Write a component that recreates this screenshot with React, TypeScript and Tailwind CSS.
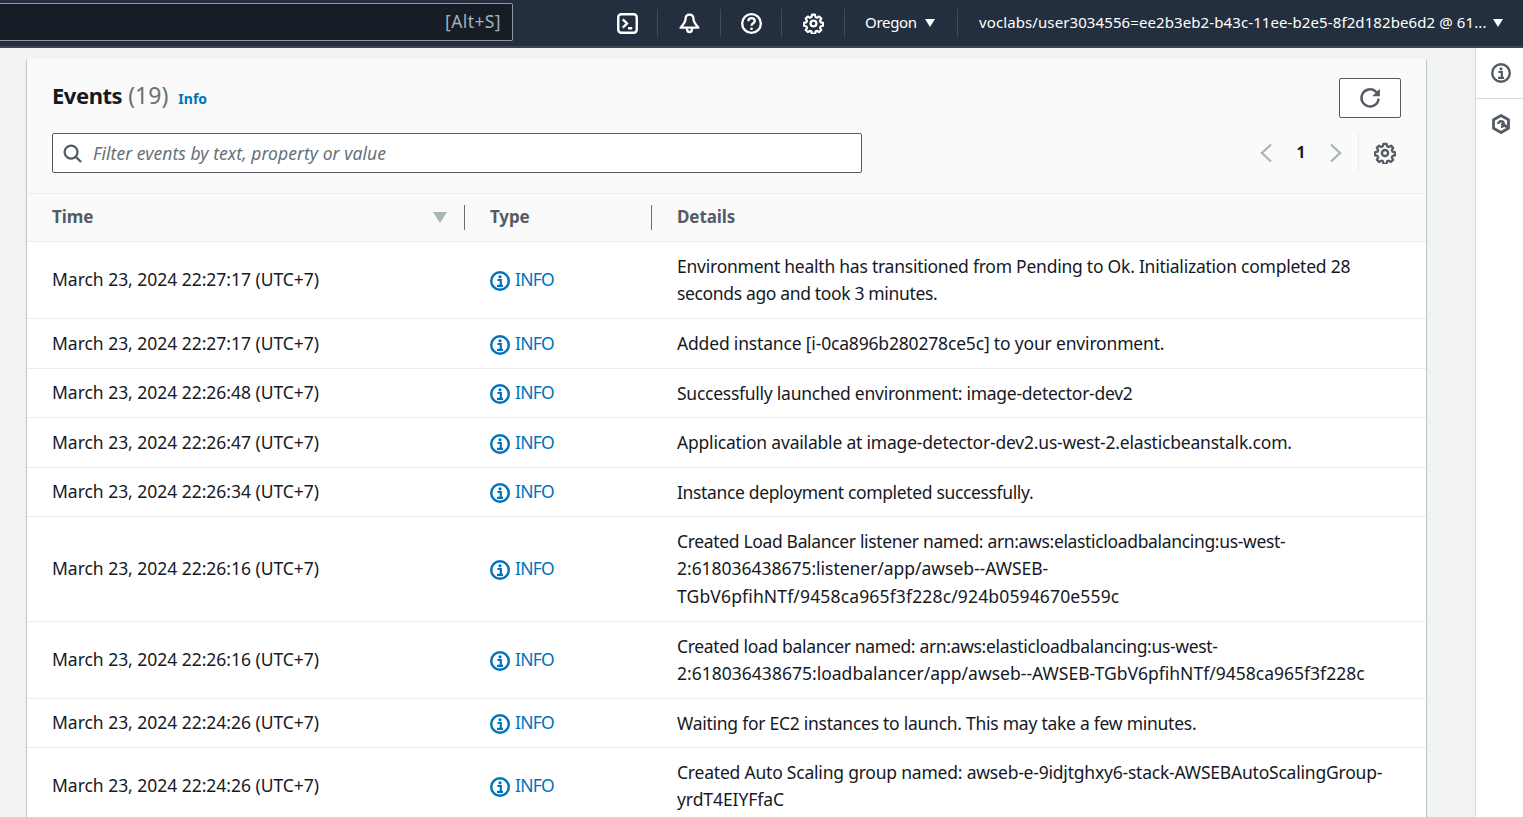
import React from "react";

type Line = [string, string];
const rows: { time: string; lines: Line[]; h: string; d: string }[] = [
  { time: "March 23, 2024 22:27:17 (UTC+7)", d: "", h: "h-[77px]", lines: [["Environment health has transitioned from Pending to Ok. Initialization completed 28", "tracking-[-0.24px]"], ["seconds ago and took 3 minutes.", "tracking-[-0.35px]"]] },
  { time: "March 23, 2024 22:27:17 (UTC+7)", d: "", h: "h-[50px]", lines: [["Added instance [i-0ca896b280278ce5c] to your environment.", "tracking-[-0.175px]"]] },
  { time: "March 23, 2024 22:26:48 (UTC+7)", d: "mt-[1px]", h: "h-[49px]", lines: [["Successfully launched environment: image-detector-dev2", "tracking-[-0.26px]"]] },
  { time: "March 23, 2024 22:26:47 (UTC+7)", d: "", h: "h-[50px]", lines: [["Application available at image-detector-dev2.us-west-2.elasticbeanstalk.com.", "tracking-[-0.2px]"]] },
  { time: "March 23, 2024 22:26:34 (UTC+7)", d: "mt-[1px]", h: "h-[49px]", lines: [["Instance deployment completed successfully.", "tracking-[-0.35px]"]] },
  { time: "March 23, 2024 22:26:16 (UTC+7)", d: "", h: "h-[105px]", lines: [["Created Load Balancer listener named: arn:aws:elasticloadbalancing:us-west-", "tracking-[-0.34px]"], ["2:618036438675:listener/app/awseb--AWSEB-", "tracking-[-0.03px]"], ["TGbV6pfihNTf/9458ca965f3f228c/924b0594670e559c", "tracking-[0.15px]"]] },
  { time: "March 23, 2024 22:26:16 (UTC+7)", d: "", h: "h-[77px]", lines: [["Created load balancer named: arn:aws:elasticloadbalancing:us-west-", "tracking-[-0.33px]"], ["2:618036438675:loadbalancer/app/awseb--AWSEB-TGbV6pfihNTf/9458ca965f3f228c", "tracking-[0.01px]"]] },
  { time: "March 23, 2024 22:24:26 (UTC+7)", d: "mt-[1px]", h: "h-[49px]", lines: [["Waiting for EC2 instances to launch. This may take a few minutes.", "tracking-[-0.26px]"]] },
  { time: "March 23, 2024 22:24:26 (UTC+7)", d: "", h: "h-[77px]", lines: [["Created Auto Scaling group named: awseb-e-9idjtghxy6-stack-AWSEBAutoScalingGroup-", "tracking-[-0.21px]"], ["yrdT4EIYFfaC", "tracking-[-0.08px]"]] },
];

function InfoIcon({ className, color }: { className: string; color: string }) {
  return (
    <svg viewBox="0 0 20 20" className={className} fill="none">
      <circle cx="10" cy="10" r="8.8" stroke={color} strokeWidth="2.4" />
      <circle cx="10" cy="5.8" r="1.6" fill={color} />
      <path d="M7.4 9h3.400v5.400M7 14.800h6" stroke={color} strokeWidth="2.200" />
    </svg>
  );
}

function Gear({ className, color, sw = 2.2 }: { className: string; color: string; sw?: number }) {
  return (
    <svg viewBox="0 0 20 20" className={className} fill="none" stroke={color} strokeWidth={sw} strokeLinejoin="round">
      <circle cx="10" cy="10" r="2.800" />
      <path d="M8.500 1.200h3l.5 2.400 1.600.7 2.100-1.300 2.100 2.100-1.300 2.100.7 1.600 2.400.5v3l-2.400.5-.7 1.600 1.300 2.100-2.100 2.100-2.100-1.300-1.600.7-.5 2.400h-3l-.5-2.400-1.600-.7-2.100 1.300-2.100-2.100 1.300-2.100-.7-1.600-2.400-.5v-3l2.400-.5.7-1.600-1.300-2.100 2.100-2.100 2.100 1.300 1.600-.7z" transform="translate(0.5 0.5) scale(0.95)" />
    </svg>
  );
}

function Divider({ x }: { x: string }) {
  return <div className={`w-px h-[28px] bg-[#414d5c] shrink-0 ${x}`} />;
}

export default function App() {
  return (
    <div className="w-[1523px] h-[817px] overflow-hidden bg-[#f2f3f3] flex flex-col text-[#16191f] text-[17.5px] font-['Noto_Sans','Open_Sans',sans-serif]">
      <header className="h-[48px] shrink-0 bg-[#232f3e] border-b-2 border-[#3d4650] flex items-center">
        <div className="w-[513px] h-[38px] -mt-[3px] shrink-0 bg-[#161d26] border border-[#8d99a8] border-l-0 rounded-r-[2px] flex items-center justify-end pr-[11px] text-[#a3aebc] text-[17.5px] tracking-[0.4px]">
          [Alt+S]
        </div>
        <div className="ml-[104px] w-[20px] shrink-0">
          <svg viewBox="0 0 20 20" className="w-[21px] h-[21px]" fill="none" stroke="#fff" strokeWidth="2.300">
            <rect x="1.200" y="1.200" width="17.600" height="17.600" rx="2.800" />
            <path d="M5.500 6l4 4-4 4M10.500 14.500h4" />
          </svg>
        </div>
        <Divider x="ml-[20px]" />
        <div className="ml-[21px] w-[21px] shrink-0">
          <svg viewBox="0 0 20 20" className="w-[21px] h-[21px]" fill="none" stroke="#fff" strokeWidth="2.200" strokeLinejoin="round">
            <path d="M10 1.500c-2.500 0-3.800 1.900-3.800 4.300 0 3.200-1.500 4.700-4.700 8.200h17c-3.200-3.500-4.700-5-4.700-8.200 0-2.400-1.300-4.300-3.800-4.300z" />
            <path d="M7.500 14.500c0 2.300 1 3.700 2.500 3.700s2.500-1.400 2.500-3.700" />
          </svg>
        </div>
        <Divider x="ml-[20px]" />
        <div className="ml-[20px] w-[20px] shrink-0">
          <svg viewBox="0 0 20 20" className="w-[21px] h-[21px]" fill="none" stroke="#fff" strokeWidth="2.200">
            <circle cx="10" cy="10" r="8.900" />
            <path d="M7 7.800c0-1.800 1.300-3 3.100-3s3 1.100 3 2.700c0 2.300-3.100 2.300-3.100 4.700" />
            <circle cx="10" cy="15" r="1.300" fill="#fff" stroke="none" />
          </svg>
        </div>
        <Divider x="ml-[20px]" />
        <div className="ml-[21px] w-[20px] shrink-0">
          <Gear className="w-[21px] h-[21px]" color="#fff" />
        </div>
        <Divider x="ml-[21px]" />
        <div className="ml-[20px] w-[52px] shrink-0 text-white text-[15px] tracking-[-0.3px] -mt-[2px] whitespace-nowrap">Oregon</div>
        <div className="ml-[8px] w-0 h-0 -mt-[1px] border-l-[5.500px] border-r-[5.500px] border-t-[8px] border-l-transparent border-r-transparent border-t-white" />
        <Divider x="ml-[22px]" />
        <div className="ml-[21px] text-white text-[15px] tracking-[0.1px] -mt-[2px] whitespace-nowrap">voclabs/user3034556=ee2b3eb2-b43c-11ee-b2e5-8f2d182be6d2 @ 61...</div>
        <div className="ml-[6px] w-0 h-0 -mt-[1px] border-l-[5.500px] border-r-[5.500px] border-t-[8px] border-l-transparent border-r-transparent border-t-white" />
      </header>

      <div className="flex flex-1 min-h-0">
        <main className="flex-1 min-w-0 pl-[27px] pr-[48px] pt-[11px]">
          <section className="w-[1399px] bg-white shadow-[0_1px_1px_0_rgba(0,28,36,0.3),1px_1px_1px_0_rgba(0,28,36,0.15),-1px_1px_1px_0_rgba(0,28,36,0.15)]">
            <div className="h-[135px] bg-[#fafafa] border-b border-[#eaeded] px-[25px] flex flex-col">
              <div className="h-[74px] flex items-start justify-between">
                <div className="flex items-baseline pt-[20px]">
                  <span className="text-[22px] font-bold leading-[32px] tracking-[-0.45px]">Events</span>
                  <span className="ml-[6px] text-[23px] leading-[32px] text-[#687078]">(19)</span>
                  <span className="ml-[10px] text-[14px] font-bold text-[#0073bb]">Info</span>
                </div>
                <button className="mt-[19px] w-[62px] h-[40px] border border-[#545b64] rounded-[2px] flex items-center justify-center bg-white">
                  <svg viewBox="0 0 20 20" className="w-[22px] h-[22px]" fill="none" stroke="#545b64" strokeWidth="2.200">
                    <path d="M17.800 10.500a7.800 7.800 0 1 1-2.600-6.400L18 7" />
                    <path d="M19 1.500v7h-7z" fill="#545b64" stroke="none" />
                  </svg>
                </button>
              </div>
              <div className="flex items-start">
                <div className="w-[810px] h-[40px] border border-[#545b64] rounded-[2px] bg-white flex items-center pl-[10px]">
                  <svg viewBox="0 0 20 20" className="w-[19px] h-[19px] shrink-0" fill="none" stroke="#545b64" strokeWidth="2.400">
                    <circle cx="8.500" cy="8.500" r="6.800" />
                    <path d="M13.500 13.500L19 19" />
                  </svg>
                  <span className="ml-[11px] italic text-[#687078] text-[17.500px] tracking-[0.05px]">Filter events by text, property or value</span>
                </div>
                <div className="ml-[398px] h-[40px] flex items-center">
                  <svg viewBox="0 0 12 20" className="w-[12px] h-[20px]" fill="none" stroke="#aab7b8" strokeWidth="2.400"><path d="M11 1.500L2 10l9 8.500" /></svg>
                  <span className="ml-[24px] w-[10px] text-[15.500px] font-bold text-center -mt-[1px]">1</span>
                  <svg viewBox="0 0 12 20" className="ml-[24px] w-[12px] h-[20px]" fill="none" stroke="#aab7b8" strokeWidth="2.400"><path d="M1 1.500L10 10l-9 8.500" /></svg>
                  <div className="ml-[16px] w-px h-[40px] bg-[#eaeded]" />
                  <Gear className="ml-[15px] w-[22px] h-[22px]" color="#545b64" />
                </div>
              </div>
            </div>

            <div className="h-[48px] bg-[#fafafa] border-b border-[#eaeded] flex items-center font-bold text-[#545b64] text-[17px]">
              <div className="w-[437px] pl-[25px] pr-[17px] flex items-center justify-between">
                <span className="-mt-[1px] tracking-[-0.1px]">Time</span>
                <span className="w-0 h-0 border-l-[7px] border-r-[7px] border-t-[11px] border-l-transparent border-r-transparent border-t-[#aab7b8]" />
              </div>
              <div className="w-px h-[25px] bg-[#687078]" />
              <div className="w-[186px] pl-[25px] -mt-[1px] tracking-[-0.1px]">Type</div>
              <div className="w-px h-[25px] bg-[#687078]" />
              <div className="pl-[25px] -mt-[1px] tracking-[-0.1px]">Details</div>
            </div>

            {rows.map((r, i) => (
              <div key={i} className={`${r.h} box-border border-b border-[#eaeded] bg-white flex items-center`}>
                <div className="w-[438px] pl-[25px] whitespace-nowrap tracking-[-0.03px] -mt-[1px]">{r.time}</div>
                <div className="w-[187px] pl-[25px] flex items-center text-[#0073bb]">
                  <InfoIcon className="w-[20px] h-[20px] shrink-0 mt-[2px]" color="#0073bb" />
                  <span className="ml-[5px] tracking-[-0.75px] -mt-[1px]">INFO</span>
                </div>
                <div className={`pl-[25px] leading-[27.500px] whitespace-nowrap ${r.d}`}>
                  {r.lines.map(([text, track], j) => (
                    <div key={j} className={track}>{text}</div>
                  ))}
                </div>
              </div>
            ))}
          </section>
        </main>
        <aside className="w-[48px] shrink-0 bg-white border-l border-[#d5dbdb] flex flex-col">
          <div className="h-[51px] flex items-center justify-center border-b border-[#d5dbdb] pl-[2px] pb-[1px]">
            <InfoIcon className="w-[20px] h-[20px]" color="#545b64" />
          </div>
          <div className="flex justify-center pl-[2px] pt-[15px]">
            <svg viewBox="0 0 20 20" className="w-[20px] h-[20px]" fill="none" stroke="#545b64" strokeWidth="2.800" strokeLinejoin="round">
              <path d="M10 1.500l7.500 4.200v8.600L10 18.500l-7.500-4.200V5.700z" />
              <path d="M7.300 10a2.700 2.700 0 1 1 2.700 2.700" strokeWidth="2.400" />
              <path d="M10.500 9.500l6.500 4" />
            </svg>
          </div>
        </aside>
      </div>
    </div>
  );
}
